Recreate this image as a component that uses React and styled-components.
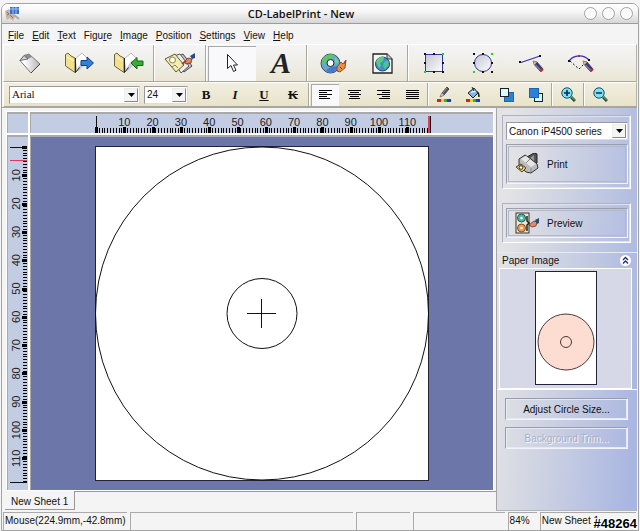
import React from 'react'
import styled, { createGlobalStyle } from 'styled-components'

const MM = 334 / 118

function App() {
    return (
        <>
            <GlobalStyle />
            <Screen>
                <Window>
                    <TitleBar>
                        <AppIcon />
                        <Title>CD-LabelPrint - New</Title>
                        <WindowButtons>
                            <RoundButton aria-label="Minimize" />
                            <RoundButton aria-label="Maximize" />
                            <RoundButton aria-label="Close" />
                        </WindowButtons>
                    </TitleBar>
                    <Menu />
                    <MainToolbar />
                    <FormatToolbar />
                    <Body>
                        <Workspace />
                        <Sidebar />
                    </Body>
                    <StatusBar>
                        <Cell $grow={126}>Mouse(224.9mm,-42.8mm)</Cell>
                        <Cell $grow={227} />
                        <Cell $grow={54} />
                        <Cell $grow={92} />
                        <Cell $grow={28}>84%</Cell>
                        <Cell $grow={97}>New Sheet 1</Cell>
                    </StatusBar>
                </Window>
                <Stamp>#48264</Stamp>
            </Screen>
        </>
    )
}

export default App

function Menu() {
    // [before, underlined key, after]
    const items = [
        ['', 'F', 'ile'],
        ['', 'E', 'dit'],
        ['', 'T', 'ext'],
        ['Figu', 'r', 'e'],
        ['', 'I', 'mage'],
        ['', 'P', 'osition'],
        ['', 'S', 'ettings'],
        ['', 'V', 'iew'],
        ['', 'H', 'elp'],
    ]
    return (
        <MenuBar>
            {items.map(([before, key, after]) => (
                <MenuItem key={before + key + after}>{before}<u>{key}</u>{after}</MenuItem>
            ))}
        </MenuBar>
    )
}

function MainToolbar() {
    return (
        <Toolbar>
            <ToolButton aria-label="New"><NewIcon /></ToolButton>
            <ToolButton aria-label="Open"><FolderIcon /></ToolButton>
            <ToolButton aria-label="Save"><FolderIcon save /></ToolButton>
            <Separator />
            <ToolButton aria-label="Design"><DesignIcon /></ToolButton>
            <Separator />
            <ToolButton $active aria-label="Select"><CursorIcon /></ToolButton>
            <ToolButton aria-label="Text"><BigLetter>A</BigLetter></ToolButton>
            <Separator />
            <ToolButton aria-label="Background"><DiscIcon /></ToolButton>
            <ToolButton aria-label="Picture"><PictureIcon /></ToolButton>
            <Separator />
            <ToolButton aria-label="Rectangle"><RectIcon /></ToolButton>
            <ToolButton aria-label="Ellipse"><EllipseIcon /></ToolButton>
            <ToolButton aria-label="Line"><LineIcon /></ToolButton>
            <ToolButton aria-label="Arc"><ArcIcon /></ToolButton>
        </Toolbar>
    )
}

function Combo({ label, value, ...rest }) {
    return (
        <ComboBox {...rest}>
            <select aria-label={label} defaultValue={value}>
                <option>{value}</option>
            </select>
            <ComboArrow>
                <svg width="7" height="4"><path d="M0 0h7L3.500 4z" /></svg>
            </ComboArrow>
        </ComboBox>
    )
}

function FormatToolbar() {
    return (
        <Toolbar $small>
            <Combo label="Font" value="Arial" $width={131} $serif />
            <Combo label="Font size" value="24" $width={44} />
            <FormatGroup>
                <FormatButton aria-label="Bold"><b>B</b></FormatButton>
                <FormatButton aria-label="Italic"><i>I</i></FormatButton>
                <FormatButton aria-label="Underline"><u>U</u></FormatButton>
                <FormatButton aria-label="Strike"><s>K</s></FormatButton>
                <Separator />
                <FormatButton $active aria-label="Align left"><AlignIcon rows={[[0, 13], [0, 8], [0, 13], [0, 8], [0, 11]]} /></FormatButton>
                <FormatButton aria-label="Align center"><AlignIcon rows={[[0, 13], [2, 9], [0, 13], [2, 9], [1, 11]]} /></FormatButton>
                <FormatButton aria-label="Align right"><AlignIcon rows={[[0, 13], [5, 8], [0, 13], [5, 8], [2, 11]]} /></FormatButton>
                <FormatButton aria-label="Justify"><AlignIcon rows={[[0, 13], [0, 13], [0, 13], [0, 13], [0, 13]]} /></FormatButton>
                <Separator />
                <FormatButton aria-label="Line color"><PenColorIcon /></FormatButton>
                <FormatButton aria-label="Fill color"><FillColorIcon /></FormatButton>
                <Spacer />
                <FormatButton aria-label="Bring to front"><LayerIcon /></FormatButton>
                <FormatButton aria-label="Send to back"><LayerIcon back /></FormatButton>
                <Separator />
                <FormatButton aria-label="Zoom in"><ZoomIcon plus /></FormatButton>
                <Separator />
                <FormatButton aria-label="Zoom out"><ZoomIcon /></FormatButton>
            </FormatGroup>
        </Toolbar>
    )
}

function Workspace() {
    return (
        <WorkArea>
            <Panes>
                <Pane $ruler />
                <Pane $ruler><HorizontalRuler /></Pane>
                <Pane $ruler><VerticalRuler /></Pane>
                <Pane>
                    <LabelSheet />
                </Pane>
            </Panes>
            <TabStrip>
                <SheetTab>New Sheet 1</SheetTab>
                <TabRest />
            </TabStrip>
        </WorkArea>
    )
}

function Sidebar() {
    return (
        <Side>
            <Group>
                <Combo label="Printer" value="Canon iP4500 series" />
                <ActionButton $tall><PrinterIcon />Print</ActionButton>
            </Group>
            <Group>
                <ActionButton><PreviewIcon />Preview</ActionButton>
            </Group>
            <PaperSection>
                <PaperHeader>
                    Paper Image
                    <Collapse aria-label="Collapse">
                        <svg width="11" height="11" viewBox="0 0 11 11">
                            <circle cx="5.500" cy="5.500" r="5.500" fill="#fff" />
                            <path d="M3 5l2.500-2.500L8 5M3 8.500L5.500 6 8 8.500" fill="none" stroke="#1c2a78" strokeWidth="1.300" />
                        </svg>
                    </Collapse>
                </PaperHeader>
                <PaperPanel>
                    <svg width="62" height="114" viewBox="0 0 62 114">
                        <rect x=".5" y=".5" width="61" height="113" fill="#fff" stroke="#22223a" />
                        <circle cx="31" cy="71" r="28" fill="#fddcd2" stroke="#4a3a3a" />
                        <circle cx="31" cy="71" r="5.500" fill="#fddcd2" stroke="#4a3a3a" />
                    </svg>
                </PaperPanel>
            </PaperSection>
            <SideButtons>
                <PlainButton>Adjust Circle Size...</PlainButton>
                <PlainButton disabled>Background Trim...</PlainButton>
            </SideButtons>
        </Side>
    )
}

/* ---- rulers and sheet ---- */

const marks = Array.from({ length: 119 }, (_, i) => i)
const tens = [10, 20, 30, 40, 50, 60, 70, 80, 90, 100, 110]

function HorizontalRuler() {
    return (
        <RulerSvg width="338" height="18">
            <g shapeRendering="crispEdges">
                {marks.map((m) => (
                    <rect
                        key={m}
                        x={Math.round(3 + m * MM) - (m % 10 ? 0 : 1)}
                        y={m % 10 ? 13 : 12}
                        width={m % 10 ? 1 : 3}
                        height={m % 10 ? 5 : 6}
                    />
                ))}
                <path d="M3.500 1v17" stroke="#111" />
                <rect x="335" y="1" width="2" height="17" fill="#e23a5c" />
                <rect x="337" y="1" width="1" height="17" fill="#111" />
            </g>
            {tens.map((m) => <text key={m} x={3 + m * MM} y="11">{m}</text>)}
        </RulerSvg>
    )
}

function VerticalRuler() {
    return (
        <RulerSvg width="20" height="338">
            <g shapeRendering="crispEdges">
                {marks.map((m) => (
                    <rect
                        key={m}
                        x={m % 10 ? 15 : 14}
                        y={Math.round(2 + m * MM) - (m % 10 ? 0 : 1)}
                        width={m % 10 ? 4 : 5}
                        height={m % 10 ? 1 : 3}
                    />
                ))}
                <path d="M2 2.500h17M2 337.500h17" stroke="#111" />
                <path d="M2 15.500h17" stroke="#e23a5c" />
            </g>
            {tens.map((m) => (
                <text key={m} transform={`translate(12 ${2 + m * MM}) rotate(-90)`}>{m}</text>
            ))}
        </RulerSvg>
    )
}

function LabelSheet() {
    return (
        <svg width="334" height="335" viewBox="0 0 334 335">
            <rect x=".5" y=".5" width="333" height="334" fill="#fff" stroke="#222238" />
            <g fill="none" stroke="#111">
                <circle cx="167" cy="167.500" r="166.500" />
                <circle cx="167" cy="167.500" r="35" />
                <path d="M152 167.500h29M166.500 153v29" />
            </g>
        </svg>
    )
}

/* ---- icons ---- */

function AppIcon() {
    return (
        <svg width="15" height="16" viewBox="0 0 15 16">
            <path d="M0 5l4-2 2 3 3 1 1 4-2 4-3-3-3 2-1-3z" fill="#c9b5a2" />
            <path d="M2 6l2 2-2 1M5 9l3 3" stroke="#7d6f78" fill="none" />
            <rect x="5" y="1" width="9" height="7" fill="#3d6fc4" />
            <path d="M5 3h9M8 1v7M11 1v7" stroke="#9cc0f0" />
            <path d="M9 9l5 4" stroke="#a8a8b0" strokeWidth="2" />
        </svg>
    )
}

function NewIcon() {
    return (
        <svg width="22" height="21" viewBox="0 0 22 21">
            <defs>
                <linearGradient id="sheet" x1="0" x2="1" y1="0" y2="0">
                    <stop offset=".2" stopColor="#fff" />
                    <stop offset="1" stopColor="#b4b4b8" />
                </linearGradient>
            </defs>
            <path d="M1 7.500L5 2.500l5-1.500L21 11l-9 9z" fill="url(#sheet)" stroke="#777" />
            <path d="M21 11l-9 9" stroke="#444" />
            <path d="M5 2.500L10 1l3 3-4 2z" fill="#8b8d92" />
            <path d="M1 7.500l4-5 4 3.500z" fill="#d2d3d6" stroke="#555a5e" strokeWidth=".8" />
        </svg>
    )
}

function FolderIcon({ save }) {
    return (
        <svg width="31" height="22" viewBox="0 0 31 22">
            <path d="M11 7l7-6 6 6-1 4-10 8z" fill="#fff" stroke="#bbb" />
            <path d="M13 17l6-9 3 3-7 8z" fill="#c9cbd3" />
            <path d="M1.500 2.500L4 1l3 3 4 2v14.500L1.500 14z" fill="#f3e08c" stroke="#6b6440" />
            <path d="M11.500 6v14.500l4-5" fill="none" stroke="#222" />
            <path d="M3 5l7 4" stroke="#fff6c8" />
            {save
                ? <path d="M18 11l6-5.500v3.500h6v4.500h-6v3.500z" fill="#35b02c" stroke="#17651a" />
                : <path d="M29.500 11L23 5v3.500h-6v5h6V17z" fill="#2f82dc" stroke="#153f86" />}
        </svg>
    )
}

function DesignIcon() {
    return (
        <svg width="32" height="22" viewBox="0 0 32 22">
            <path d="M10 7L19 2l9 12-8 6z" fill="#c8c8c8" stroke="#444" />
            <path d="M7 5l9-3 9 12-8 7z" fill="#eee" stroke="#555" />
            <path d="M1 7l10-5 9 11-8 7z" fill="#f2edb4" stroke="#5d5a3a" />
            <circle cx="8.500" cy="8" r="3" fill="#fffbe0" stroke="#8a8546" />
            <path d="M8 15l3-2 3 3" stroke="#8a8546" fill="none" />
            <path d="M20 10l4-4 4 1-1 4-5 1z" fill="#d58a62" stroke="#6e3522" strokeWidth=".8" />
            <path d="M26 4l5-3v5l-3 1z" fill="#274d7f" />
            <path d="M18 12l4-3" stroke="#b03a26" strokeWidth="2" />
        </svg>
    )
}

function CursorIcon() {
    return (
        <svg width="13" height="20" viewBox="0 0 13 20">
            <path d="M1.500 1.500v14L5 12.500l2.500 6 2.500-1.200-2.500-5.300h4z" fill="#fff" stroke="#222" />
        </svg>
    )
}

function DiscIcon() {
    return (
        <svg width="27" height="21" viewBox="0 0 27 21">
            <circle cx="10.500" cy="10.500" r="9.500" fill="#62a8cf" stroke="#37506b" />
            <path d="M2 7C4 2 10 0 15 2l-3 4-5 2-4 5z" fill="#5fc36d" />
            <path d="M6 17l5-3 7-1-4 6-5 1z" fill="#4878d0" />
            <path d="M15 4l4 5-4 2z" fill="#7ed08b" />
            <circle cx="10.500" cy="10" r="3.500" fill="#fff" stroke="#222" />
            <path d="M17 14l4-5 2 2 3-4-1 8-5 4-3-1z" fill="#e6913d" stroke="#7a3718" strokeWidth=".8" />
            <path d="M20 14l2 2M25 8v3" stroke="#a02d20" />
        </svg>
    )
}

function PictureIcon() {
    return (
        <svg width="21" height="21" viewBox="0 0 21 21">
            <path d="M1 1h14l5 5v14H1z" fill="#f5f5f5" stroke="#222" strokeWidth="1.300" />
            <path d="M15 1v5h5" fill="#ccc" stroke="#333" />
            <circle cx="10.500" cy="11" r="7" fill="#3e8ecb" stroke="#1c4a6e" />
            <path d="M4 9c1-4 5-6 8-5l-1 4-3 2 1 3-2 2z" fill="#5dcb7f" />
            <path d="M12 9l4-2 1 5-4 4-2-3z" fill="#4ec191" />
        </svg>
    )
}

function ShapeFade() {
    return (
        <defs>
            <linearGradient id="shape" x1="0" x2="1" y1="0" y2="1">
                <stop offset="0" stopColor="#c3c6cf" />
                <stop offset="1" stopColor="#fdfdff" />
            </linearGradient>
        </defs>
    )
}

function RectIcon() {
    return (
        <svg width="20" height="20" viewBox="0 0 20 20">
            <ShapeFade />
            <rect x="1.500" y="1.500" width="17" height="17" fill="url(#shape)" stroke="#3434ac" />
            <path d="M0 0h2v2H0zM9 0h2v2H9zM0 9h2v2H0zM18 9h2v2h-2zM9 18h2v2H9zM18 18h2v2h-2z" fill="#111" />
            <path d="M18 0h2v2h-2zM0 18h2v2H0z" fill="#26d426" />
        </svg>
    )
}

function EllipseIcon() {
    return (
        <svg width="20" height="20" viewBox="0 0 20 20">
            <circle cx="10" cy="10" r="8.500" fill="url(#shape)" stroke="#3434ac" />
            <path d="M0 0h2v2H0zM9 0h2v2H9zM0 9h2v2H0zM18 9h2v2h-2zM9 18h2v2H9zM18 18h2v2h-2z" fill="#111" />
            <path d="M18 0h2v2h-2zM0 18h2v2H0z" fill="#26d426" />
        </svg>
    )
}

function Pencil({ x, y }) {
    return (
        <g transform={`translate(${x} ${y})`}>
            <path d="M0 0l4 1 6 7-2.500 2.500-6-6.500z" fill="#39399a" stroke="#1a1a40" strokeWidth=".6" />
            <path d="M0 0l4 1-2.500 3z" fill="#e8b27c" />
            <path d="M2.500 4l5 5" stroke="#e0a93c" />
            <path d="M10 8L7.500 10.500" stroke="#b83030" strokeWidth="2" />
        </g>
    )
}

function LineIcon() {
    return (
        <svg width="26" height="18" viewBox="0 0 26 18">
            <path d="M2 8.500L21 2" stroke="#3333b0" strokeWidth="1.300" />
            <path d="M0 7h2v2H0zM20 1h2v2h-2z" fill="#111" />
            <Pencil x={14} y={7} />
        </svg>
    )
}

function ArcIcon() {
    return (
        <svg width="26" height="18" viewBox="0 0 26 18">
            <path d="M1.500 6.500C6 1 15 0 21 6" fill="none" stroke="#3333b0" strokeWidth="1.300" />
            <path d="M2 7l9 8 6-6" fill="none" stroke="#111" strokeDasharray="2 2" />
            <path d="M0 6h2v2H0zM20 5h2v2h-2z" fill="#111" />
            <path d="M10 1h2v2h-2z" fill="#c62828" />
            <Pencil x={15} y={7} />
        </svg>
    )
}

function AlignIcon({ rows }) {
    return (
        <svg width="13" height="10" shapeRendering="crispEdges">
            {rows.map(([x, w], i) => <rect key={i} x={x} y={i * 2} width={w} height="1" />)}
        </svg>
    )
}

function ColorStrip() {
    return (
        <g>
            <path d="M0 12h4v3H0z" fill="#d92020" />
            <path d="M4 12h3v3H4z" fill="#e8d820" />
            <path d="M7 12h3v3H7z" fill="#26b53a" />
            <path d="M10 12h4v3h-4z" fill="#2238c8" />
        </g>
    )
}

function PenColorIcon() {
    return (
        <svg width="14" height="15" viewBox="0 0 14 15">
            <path d="M3 10l2-4 5-6 2 2-5 6z" fill="#3550a8" stroke="#222" strokeWidth=".7" />
            <path d="M3 10l2-4 2 2z" fill="#eec08c" />
            <path d="M6 6l4-5" stroke="#d98a2b" />
            <ColorStrip />
        </svg>
    )
}

function FillColorIcon() {
    return (
        <svg width="14" height="15" viewBox="0 0 14 15">
            <path d="M2 6l6-5 4 5-5 5z" fill="#7fb6e8" stroke="#222" />
            <path d="M4 6l4-3 2 2z" fill="#e6f3ff" />
            <path d="M11 5c2 1 2 3 2 5" fill="none" stroke="#222" strokeWidth="1.500" />
            <path d="M6 0l2 4" stroke="#222" />
            <ColorStrip />
        </svg>
    )
}

function LayerIcon({ back }) {
    return back ? (
        <svg width="14" height="14" viewBox="0 0 14 14">
            <rect x="5.500" y="5.500" width="8" height="8" fill="#dff4fa" stroke="#123" />
            <rect x=".5" y=".5" width="9" height="9" fill="#2882dc" stroke="#2064b0" />
        </svg>
    ) : (
        <svg width="14" height="14" viewBox="0 0 14 14">
            <rect x="4.500" y="4.500" width="9" height="9" fill="#2882dc" stroke="#2064b0" />
            <rect x=".5" y=".5" width="8" height="8" fill="#dff8fb" stroke="#123" />
        </svg>
    )
}

function ZoomIcon({ plus }) {
    return (
        <svg width="15" height="15" viewBox="0 0 15 15">
            <path d="M10 10l4 4" stroke="#1d4d3c" strokeWidth="3" />
            <path d="M10.500 10l3.500 3.500" stroke="#7bc47d" />
            <circle cx="6" cy="6" r="5.200" fill="#7fe2f2" stroke="#17506b" />
            <path d={plus ? 'M3 6h6M6 3v6' : 'M3 6h6'} stroke="#0c2c55" strokeWidth="1.600" />
        </svg>
    )
}

function PrinterIcon() {
    return (
        <svg width="25" height="22" viewBox="0 0 25 22">
            <path d="M12 4l7-4 3 1v9l-5 3z" fill="#555" stroke="#222" />
            <path d="M15 5l4-3v7z" fill="#999" />
            <path d="M4 6l6-4 6 4 6 5 1 4-7 5-5-1-7-7z" fill="#bcbcbe" stroke="#333" />
            <path d="M6 6l5-3 10 8-5 3z" fill="#e6e6e8" />
            <path d="M11 10l4-4M16 15v4" stroke="#888" fill="none" />
            <path d="M1 14l5-3 5 4-4 4z" fill="#e8cf55" stroke="#4d4320" />
            <circle cx="6" cy="14.500" r="1.800" fill="#fff" stroke="#333" />
        </svg>
    )
}

function PreviewIcon() {
    return (
        <svg width="25" height="22" viewBox="0 0 25 22">
            <rect x="1" y="1" width="13" height="20" fill="#efe9d8" stroke="#333" />
            <circle cx="6.500" cy="6" r="4" fill="#53b7a4" stroke="#1f5e55" />
            <circle cx="6.500" cy="6" r="1.300" fill="#fff" />
            <circle cx="6.500" cy="16" r="4" fill="#e9a04f" stroke="#8a4a1c" />
            <circle cx="6.500" cy="16" r="1.300" fill="#fff" />
            <path d="M12 4v5l2 2-2 2v6" stroke="#222" fill="none" strokeWidth="1.500" />
            <path d="M14 13l5-4 3 1-1 4-4 1z" fill="#dd8d68" stroke="#6e3522" strokeWidth=".8" />
            <path d="M20 8l4-2v5l-2 1z" fill="#274d7f" />
        </svg>
    )
}

/* ---- styles ---- */

const GlobalStyle = createGlobalStyle`
    * {
        box-sizing: border-box;
    }

    body {
        margin: 0;
        background: #f4f4f4;
        color: #111;
        font-family: 'Liberation Sans', sans-serif;
        font-size: 10px;
        line-height: 13px;
    }

    button, select {
        font: inherit;
        color: inherit;
        margin: 0;
        padding: 0;
        border: 0;
        background: none;
    }

    svg {
        display: block;
        flex: none;
    }
`
const Screen = styled.div`
    position: relative;
    display: flex;
    min-height: 100vh;
    padding: 3px 1px 0;
`
// Window frame with rounded top corners
const Window = styled.div`
    flex: 1;
    min-width: 0;
    display: flex;
    flex-direction: column;
    border: 1px solid #a3a3a3;
    border-radius: 7px 7px 0 0;
    background: #f4f4f4;
    overflow: hidden;
`
const TitleBar = styled.header`
    height: 20px;
    display: grid;
    grid-template-columns: 1fr auto 1fr;
    align-items: center;
    padding: 0 5px 0 3px;
    border-bottom: 1px solid #9c9c9c;
    background: linear-gradient(#fff, #f6f6f6 40%, #d6d6d6);
`
const Title = styled.h1`
    margin: 0;
    padding-right: 36px;
    font: 600 11px/18px 'Open Sans', sans-serif;
    color: #111;
`
const WindowButtons = styled.div`
    display: flex;
    justify-content: flex-end;
    gap: 5px;
`
const RoundButton = styled.button`
    width: 13px;
    height: 13px;
    border: 1px solid #a2a2a2;
    border-radius: 50%;
    background: #fafafa;
`
const MenuBar = styled.nav`
    height: 20px;
    display: flex;
    align-items: center;
    gap: 8px;
    padding: 2px 6px 0;
`
const MenuItem = styled.button``

// Both tool rows
const Toolbar = styled.div`
    height: ${(p) => (p.$small ? 25 : 38)}px;
    display: flex;
    align-items: center;
    gap: ${(p) => (p.$small ? 4 : 1)}px;
    margin: 0 1px;
    padding: 0 ${(p) => (p.$small ? 5 : 2)}px;
    border: 1px solid #fff;
    border-right-color: #b5b2a8;
    border-bottom-color: #aaa89e;
    background: ${(p) => (p.$small ? 'linear-gradient(#f1eee0, #e8e3c9)' : 'linear-gradient(#f4f4f4, #efeee8 50%, #eae5d4)')};
`
const ToolButton = styled.button`
    width: 48px;
    height: 35px;
    display: flex;
    align-items: center;
    justify-content: center;
    background: ${(p) => (p.$active ? '#f9f9fb' : 'none')};
    box-shadow: ${(p) => (p.$active ? 'inset 1px 1px #aaa' : 'none')};
`
const BigLetter = styled.span`
    font: italic bold 30px/32px 'Liberation Serif', serif;
    color: #222;
`
const Separator = styled.span`
    align-self: stretch;
    width: 2px;
    border-left: 1px solid #aaa79c;
    border-right: 1px solid #fff;
`
const Spacer = styled.span`
    width: 4px;
`
const FormatGroup = styled.div`
    align-self: stretch;
    display: flex;
    align-items: center;
    gap: 1px;
`
const FormatButton = styled.button`
    width: 28px;
    height: 22px;
    display: flex;
    align-items: center;
    justify-content: center;
    font: bold 13px/16px 'Liberation Serif', serif;
    background: ${(p) => (p.$active ? '#f9f9fb' : 'none')};
    box-shadow: ${(p) => (p.$active ? 'inset 1px 1px #aaa' : 'none')};
`
// Sunken drop-down, the arrow sits in the same grid cell
const ComboBox = styled.div`
    width: ${(p) => (p.$width ? p.$width + 'px' : 'auto')};
    height: 18px;
    display: grid;
    border: 1px solid #999;
    border-right-color: #ddd;
    border-bottom-color: #ddd;
    background: #fff;

    select {
        grid-area: 1 / 1;
        appearance: none;
        width: 100%;
        padding: 0 14px 0 2px;
        font-family: ${(p) => (p.$serif ? "'Liberation Serif', serif" : 'inherit')};
        font-size: ${(p) => (p.$serif ? 11 : 10)}px;
    }
`
const ComboArrow = styled.span`
    grid-area: 1 / 1;
    justify-self: end;
    width: 14px;
    margin: 1px;
    display: flex;
    align-items: center;
    justify-content: center;
    border: 1px solid #eee;
    border-right-color: #888;
    border-bottom-color: #888;
    background: #f4f4f4;
    pointer-events: none;
`
const Body = styled.main`
    flex: 1;
    display: flex;
    margin-right: 1px;
    border-top: 1px solid #a5a5a5;
`
const WorkArea = styled.section`
    flex: 1;
    min-width: 0;
    display: flex;
    flex-direction: column;
`
const Panes = styled.div`
    flex: 1;
    display: grid;
    grid-template-columns: 21px 1fr;
    grid-template-rows: 21px 1fr;
    gap: 2px;
    padding: 4px 3px 1px 5px;
`
const Pane = styled.div`
    display: flex;
    align-items: center;
    justify-content: center;
    border-top: 2px solid #a9a9ab;
    border-left: 1px solid #a9a9ab;
    outline: 1px solid #fff;
    background: ${(p) => (p.$ruler ? '#c2cce2' : '#6c76a9')};
    overflow: hidden;
`
const RulerSvg = styled.svg`
    text {
        font-family: 'Liberation Sans', sans-serif;
        font-size: 11px;
        text-anchor: middle;
        fill: #222;
    }
`
const TabStrip = styled.div`
    display: flex;
    height: 20px;
    padding-left: 3px;
`
const SheetTab = styled.button`
    height: 19px;
    padding: 2px 6px 0;
    border-right: 1px solid #999;
    border-bottom: 1px solid #999;
`
const TabRest = styled.span`
    flex: 1;
    border-top: 1px solid #999;
`
const Side = styled.aside`
    width: 141px;
    display: flex;
    flex-direction: column;
    border-left: 1px solid #a5a5a5;
    border-bottom: 1px solid #b5b5b5;
    background: linear-gradient(95deg, #e3e3e5 10%, #c9cfe2 50%, #a9b6e1 95%);
`
const Group = styled.div`
    display: flex;
    flex-direction: column;
    gap: 4px;
    margin: 7px 6px 7px 5px;
    padding: 4px 2px 4px 3px;
    border: 1px solid #adb1c2;
    border-right-color: #fff;
    border-bottom-color: #fff;
    outline: 1px solid #dfe3f0;
    outline-offset: -2px;

    & > :first-child:not(button) {
        margin-top: 2px;
    }
`
const ActionButton = styled.button`
    height: ${(p) => (p.$tall ? 40 : 30)}px;
    display: flex;
    align-items: center;
    gap: 7px;
    padding-left: 8px;
    border: 1px solid #9a9eaf;
    border-right-color: #f2f4fa;
    border-bottom-color: #f2f4fa;
    outline: 1px solid #b4b8c8;
    outline-offset: -3px;
`
const PaperSection = styled.section`
    margin-top: 2px;
    padding-left: 2px;
    border-top: 1px solid #e6e9f5;
    border-bottom: 1px solid #fff;
`
const PaperHeader = styled.h2`
    height: 15px;
    margin: 0;
    padding: 0 6px 0 3px;
    display: flex;
    align-items: center;
    justify-content: space-between;
    font-size: 10px;
    font-weight: normal;
`
const Collapse = styled.button`
    display: flex;
`
const PaperPanel = styled.div`
    display: flex;
    justify-content: center;
    margin-right: 5px;
    padding: 2px 0 3px;
    border: 1px solid #fff;
    background: #d6d8e8;
`
const SideButtons = styled.div`
    display: flex;
    flex-direction: column;
    gap: 7px;
    padding: 8px 9px 0 8px;
`
const PlainButton = styled.button`
    height: 22px;
    border: 1px solid #989cac;
    border-right-color: #f2f4fa;
    border-bottom-color: #f2f4fa;
    outline: 1px solid #e6e9f3;
    outline-offset: -2px;

    &:disabled {
        color: #aab0c6;
        text-shadow: 1px 1px #f4f6fc;
    }
`
const StatusBar = styled.footer`
    display: flex;
    gap: 3px;
    height: 18px;
    margin: 1px 2px 0 1px;
`
const Cell = styled.span`
    flex: ${(p) => p.$grow} 1 0;
    min-width: 0;
    padding: 1px 0 0 1px;
    border-top: 1px solid #aaa;
    border-left: 1px solid #aaa;
    white-space: nowrap;
    overflow: hidden;
`
// Number printed over the corner of the window
const Stamp = styled.span`
    position: absolute;
    right: 3px;
    bottom: 0;
    font: bold 13px/14px 'Liberation Sans', sans-serif;
    color: #000;
    text-shadow: 1px 0 #fff, -1px 0 #fff, 0 1px #fff, 0 -1px #fff, 1px 1px #fff, -1px -1px #fff, 1px -1px #fff, -1px 1px #fff;
`
